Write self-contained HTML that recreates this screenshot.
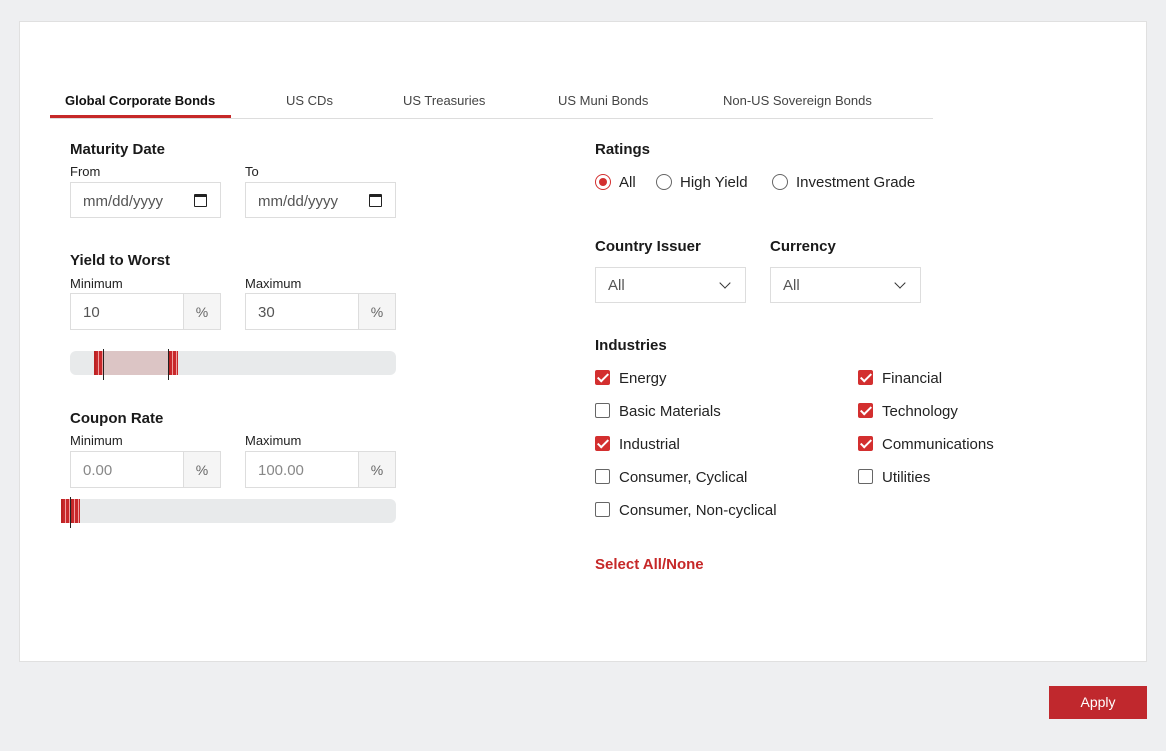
<!DOCTYPE html>
<html><head><style>
*{box-sizing:border-box;margin:0;padding:0}
body{width:1166px;height:751px;background:#eeeff1;font-family:"Liberation Sans",sans-serif;color:#222;position:relative;overflow:hidden}
.card{position:absolute;left:19px;top:21px;width:1128px;height:641px;background:#fff;border:1px solid #e0e0e0}
.a{position:absolute}
.tab{position:absolute;top:93px;font-size:13px;color:#444}
.h{position:absolute;font-size:15px;font-weight:bold;color:#1a1a1a}
.l{position:absolute;font-size:13px;color:#222}
.in{position:absolute;border:1px solid #ddd;background:#fff;height:37px;font-size:15px;color:#555;padding:10px 0 0 12px}
.pct{position:absolute;border:1px solid #ddd;background:#f5f5f5;width:38px;height:37px;font-size:14px;color:#666;text-align:center;padding-top:10px}
.cal{position:absolute;right:13px;top:11px;width:13px;height:13px;border:1.5px solid #222;border-top-width:3px;border-radius:1px}
.track{position:absolute;height:24px;background:#e8eaeb;border-radius:6px}
.hd{position:absolute;width:10px;height:24px;background:#c8282b;border-left:2px solid #b22;}
.hd:before{content:"";position:absolute;left:2px;top:0;width:3px;height:24px;border-left:1px solid #f0a0a0;border-right:1px solid #f0a0a0}
.vl{position:absolute;width:1px;background:#222}
.cb{position:absolute;width:15px;height:15px;border:1px solid #666;border-radius:2px;background:#fff}
.cb.on{background:#d32f2f;border-color:#d32f2f}
.cb.on:after{content:"";position:absolute;left:4px;top:0px;width:4px;height:9px;border:solid #fff;border-width:0 2px 2px 0;transform:rotate(45deg)}
.ct{position:absolute;font-size:15px;color:#222}
.rd{position:absolute;width:16px;height:16px;border:1px solid #666;border-radius:50%;top:174px}
.sel{position:absolute;top:267px;width:151px;height:36px;border:1px solid #ddd;font-size:15px;color:#555;padding:9px 0 0 12px}
.chev{position:absolute;right:16px;top:11px;width:8px;height:8px;border:solid #333;border-width:0 1.5px 1.5px 0;transform:rotate(45deg)}
</style></head><body>
<div class="card"></div>
<div class="a" style="left:50px;top:118px;width:883px;height:1px;background:#ddd"></div>
<div class="a" style="left:50px;top:115px;width:181px;height:3px;background:#c62828"></div>
<div class="tab" style="left:65px;font-weight:bold;color:#111">Global Corporate Bonds</div>
<div class="tab" style="left:286px">US CDs</div>
<div class="tab" style="left:403px">US Treasuries</div>
<div class="tab" style="left:558px">US Muni Bonds</div>
<div class="tab" style="left:723px">Non-US Sovereign Bonds</div>

<div class="h" style="left:70px;top:141px">Maturity Date</div>
<div class="l" style="left:70px;top:164px">From</div>
<div class="l" style="left:245px;top:164px">To</div>
<div class="in" style="left:70px;top:182px;width:151px;height:36px">mm/dd/yyyy<div class="cal"></div></div>
<div class="in" style="left:245px;top:182px;width:151px;height:36px">mm/dd/yyyy<div class="cal"></div></div>

<div class="h" style="left:70px;top:252px">Yield to Worst</div>
<div class="l" style="left:70px;top:276px">Minimum</div>
<div class="l" style="left:245px;top:276px">Maximum</div>
<div class="in" style="left:70px;top:293px;width:114px">10</div><div class="pct" style="left:183px;top:293px">%</div>
<div class="in" style="left:245px;top:293px;width:114px">30</div><div class="pct" style="left:358px;top:293px">%</div>
<div class="track" style="left:70px;top:351px;width:326px"></div>
<div class="a" style="left:103px;top:351px;width:66px;height:24px;background:#dcc5c5"></div>
<div class="hd" style="left:94px;top:351px"></div><div class="hd" style="left:168px;top:351px"></div>
<div class="vl" style="left:103px;top:349px;height:31px"></div><div class="vl" style="left:168px;top:349px;height:31px"></div>

<div class="h" style="left:70px;top:410px">Coupon Rate</div>
<div class="l" style="left:70px;top:433px">Minimum</div>
<div class="l" style="left:245px;top:433px">Maximum</div>
<div class="in" style="left:70px;top:451px;width:114px;color:#888">0.00</div><div class="pct" style="left:183px;top:451px">%</div>
<div class="in" style="left:245px;top:451px;width:114px;color:#888">100.00</div><div class="pct" style="left:358px;top:451px">%</div>
<div class="track" style="left:70px;top:499px;width:326px"></div>
<div class="hd" style="left:61px;top:499px"></div><div class="hd" style="left:70px;top:499px"></div>
<div class="vl" style="left:70px;top:497px;height:31px"></div>

<div class="h" style="left:595px;top:141px">Ratings</div>
<div class="rd" style="left:595px;border-color:#d32f2f"><div class="a" style="left:3px;top:3px;width:8px;height:8px;border-radius:50%;background:#d32f2f"></div></div>
<div class="ct" style="left:619px;top:174px">All</div>
<div class="rd" style="left:656px"></div><div class="ct" style="left:680px;top:174px">High Yield</div>
<div class="rd" style="left:772px"></div><div class="ct" style="left:796px;top:174px">Investment Grade</div>

<div class="h" style="left:595px;top:238px">Country Issuer</div>
<div class="h" style="left:770px;top:238px">Currency</div>
<div class="sel" style="left:595px">All<div class="chev"></div></div>
<div class="sel" style="left:770px">All<div class="chev"></div></div>

<div class="h" style="left:595px;top:337px">Industries</div>
<div class="cb on" style="left:595px;top:370px"></div><div class="ct" style="left:619px;top:370px">Energy</div>
<div class="cb" style="left:595px;top:403px"></div><div class="ct" style="left:619px;top:403px">Basic Materials</div>
<div class="cb on" style="left:595px;top:436px"></div><div class="ct" style="left:619px;top:436px">Industrial</div>
<div class="cb" style="left:595px;top:469px"></div><div class="ct" style="left:619px;top:469px">Consumer, Cyclical</div>
<div class="cb" style="left:595px;top:502px"></div><div class="ct" style="left:619px;top:502px">Consumer, Non-cyclical</div>
<div class="cb on" style="left:858px;top:370px"></div><div class="ct" style="left:882px;top:370px">Financial</div>
<div class="cb on" style="left:858px;top:403px"></div><div class="ct" style="left:882px;top:403px">Technology</div>
<div class="cb on" style="left:858px;top:436px"></div><div class="ct" style="left:882px;top:436px">Communications</div>
<div class="cb" style="left:858px;top:469px"></div><div class="ct" style="left:882px;top:469px">Utilities</div>

<div class="a" style="left:595px;top:556px;font-size:15px;font-weight:bold;color:#c62828">Select All/None</div>
<div class="a" style="left:1049px;top:686px;width:98px;height:33px;background:#c0282d;color:#fff;font-size:14px;text-align:center;padding-top:8px">Apply</div>
</body></html>
